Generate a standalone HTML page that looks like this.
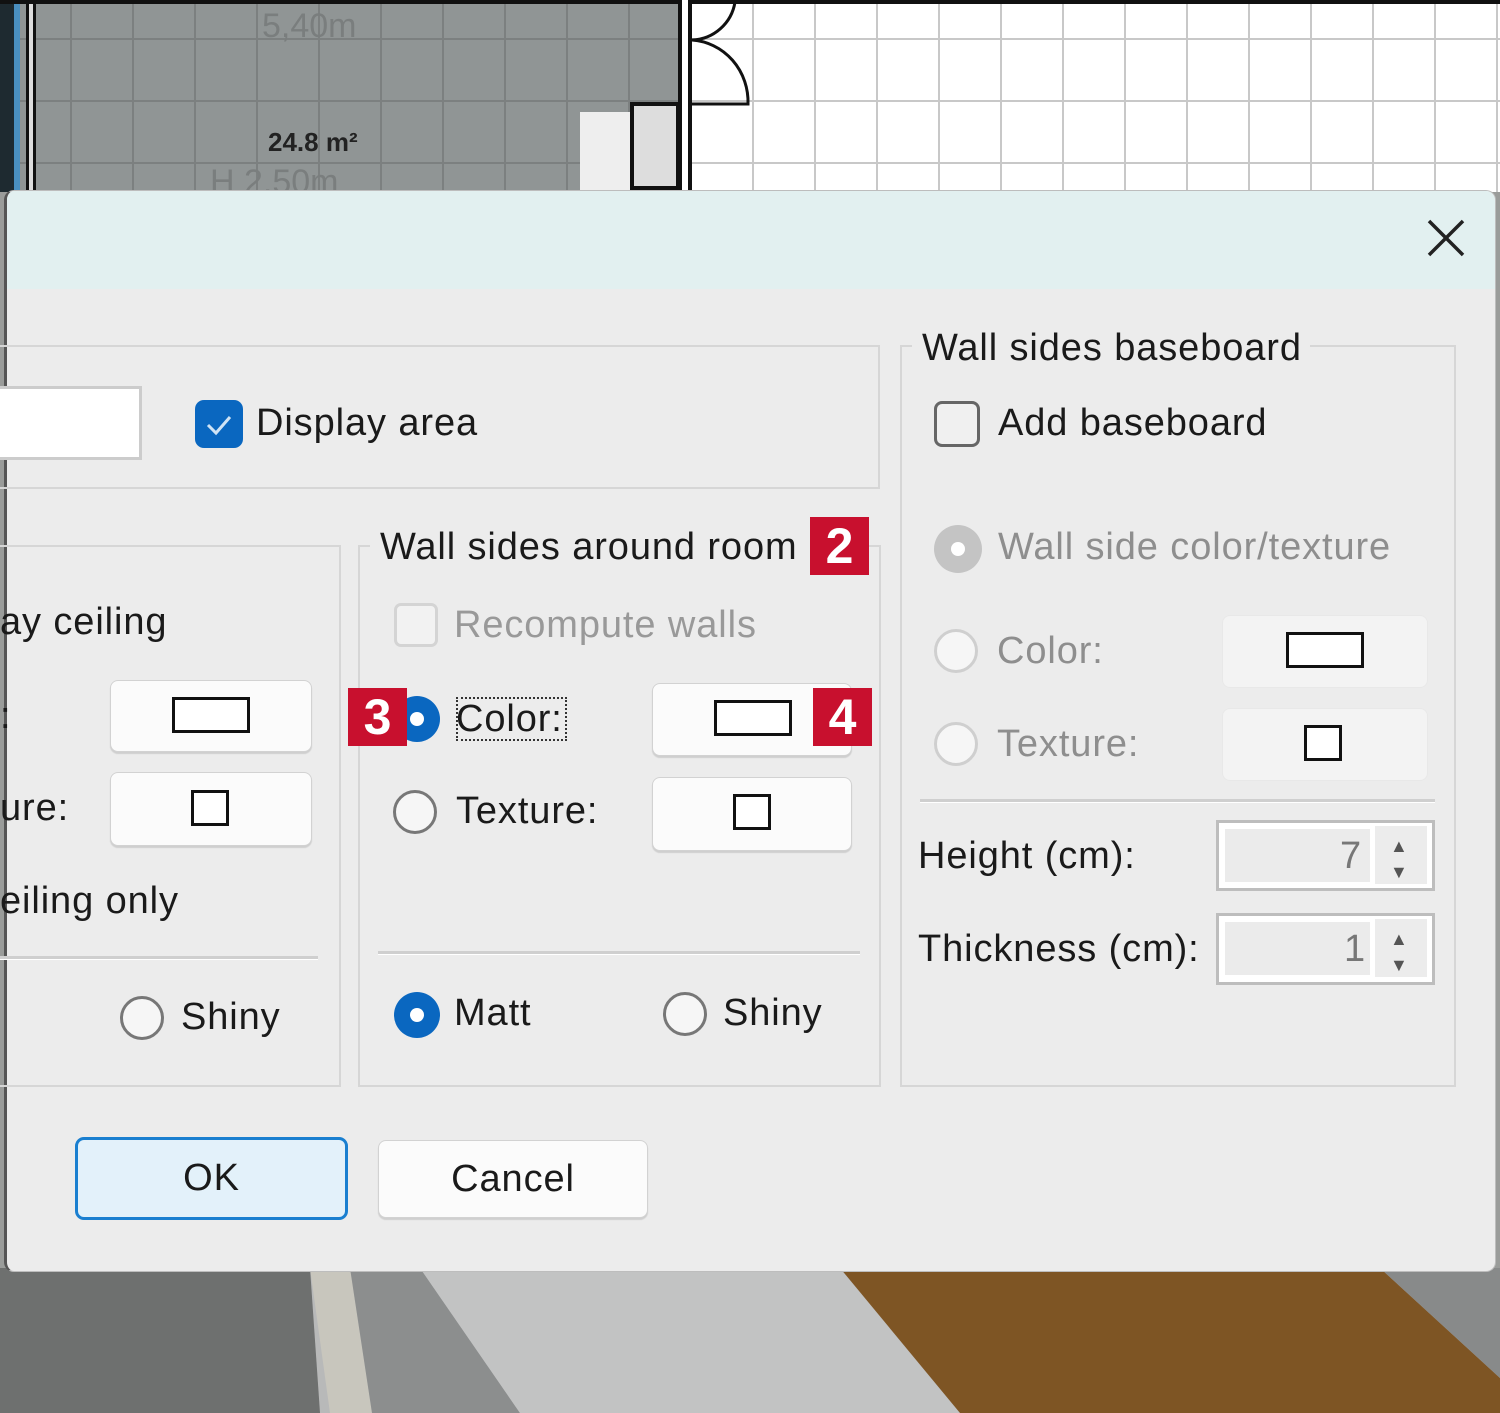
<!DOCTYPE html>
<html><head><meta charset="utf-8"><style>
*{margin:0;padding:0;box-sizing:border-box}
body{width:1500px;height:1413px;overflow:hidden;position:relative;background:#9a9c9a;font-family:"Liberation Sans",sans-serif;}
.a{position:absolute}
.t{position:absolute;font-size:38px;line-height:44px;color:#1a1a1a;white-space:nowrap;letter-spacing:0.9px}
.g{color:#8e8e8e}
.box{position:absolute;border:2px solid #d6d6d6;}
.btn{position:absolute;background:#fbfbfb;border:1px solid #d2d2d2;border-radius:8px;box-shadow:0 2px 1px #cfcfcf}
.btn.f{background:#f3f3f3;border-color:#e8e8e8;box-shadow:none}
.sw{position:absolute;border:3px solid #111;background:#fff}
.rad{position:absolute;width:44px;height:44px;border-radius:50%;border:3px solid #777;background:#f6f6f6}
.rad.f{border-color:#cfcfcf}
.badge{position:absolute;background:#c8102e;color:#fff;font-weight:bold;font-size:50px;line-height:58px;text-align:center;width:59px;height:58px}
.sep{position:absolute;height:4px;background:#cfcfcf;border-bottom:1px solid #fff}
</style></head><body>
<div class="a" style="left:0;top:0;width:1500px;height:192px;background:#fff;
background-image:linear-gradient(#c8c8c8 2px,transparent 2px),linear-gradient(90deg,#c8c8c8 2px,transparent 2px);background-size:62px 62px;background-position:0 38px,8px 0"></div>
<div class="a" style="left:0;top:0;width:682px;height:192px;background:#909595;
background-image:linear-gradient(#7c8080 2px,transparent 2px),linear-gradient(90deg,#7c8080 2px,transparent 2px);background-size:62px 62px;background-position:0 38px,8px 0"></div>
<div class="a" style="left:0;top:0;width:14px;height:192px;background:#1e2a30"></div>
<div class="a" style="left:14px;top:0;width:6px;height:192px;background:#4a8fbf"></div>
<div class="a" style="left:26px;top:0;width:10px;height:192px;border-left:3px solid #111;border-right:3px solid #111;background:#ddd"></div>
<div class="a" style="left:0;top:0;width:1500px;height:4px;background:#111"></div>
<div class="a" style="left:678px;top:0;width:14px;height:192px;border-left:4px solid #111;border-right:4px solid #111;background:#fff"></div>
<div class="a" style="left:580px;top:112px;width:50px;height:80px;background:#eee"></div>
<div class="a" style="left:630px;top:102px;width:50px;height:88px;border:4px solid #111;background:#ddd"></div>
<svg class="a" style="left:690px;top:0" width="70" height="110"><path d="M2 40 A45 45 0 0 0 45 2 M2 40 A60 62 0 0 1 58 104 L2 104" fill="none" stroke="#111" stroke-width="3"/></svg>
<div class="t" style="left:262px;top:4px;color:#7a7e7e;font-size:34px;letter-spacing:0">5,40m</div>
<div class="t" style="left:268px;top:120px;font-size:26px;font-weight:bold;color:#222;letter-spacing:0">24.8 m²</div>
<div class="t" style="left:210px;top:160px;color:#7a7e7e;font-size:34px;letter-spacing:0">H 2,50m</div>
<div class="a" style="left:0;top:1268px;width:1500px;height:145px;background:#b8b9b9"></div>
<svg class="a" style="left:0;top:1268px" width="1500" height="145">
<polygon points="0,0 310,0 320,145 0,145" fill="#6e706f"/>
<polygon points="310,0 350,0 372,145 330,145" fill="#c8c6bd"/>
<polygon points="350,0 420,0 520,145 372,145" fill="#8c8e8e"/>
<polygon points="420,0 840,0 960,145 520,145" fill="#c2c3c3"/>
<polygon points="840,0 1380,0 1500,110 1500,145 960,145" fill="#7e5524"/>
<polygon points="1380,0 1500,0 1500,110" fill="#888a8a"/>
</svg>
<div class="a" style="left:4px;top:190px;width:1492px;height:1082px;background:#ececec;border-radius:10px;border:1px solid #bdbdbd;border-left:3px solid #555;overflow:hidden">
<div class="a" style="left:0;top:0;width:100%;height:98px;background:#e2f0f0"></div>
</div>
<svg class="a" style="left:1426px;top:218px" width="40" height="40"><path d="M3 3L37 37M37 3L3 37" stroke="#222" stroke-width="3.5"/></svg>
<div class="box" style="left:-4px;top:345px;width:884px;height:144px"></div>
<div class="box" style="left:-4px;top:545px;width:345px;height:542px"></div>
<div class="box" style="left:358px;top:545px;width:523px;height:542px"></div>
<div class="box" style="left:900px;top:345px;width:556px;height:742px"></div>
<div class="a" style="left:370px;top:530px;width:440px;height:40px;background:#ececec"></div>
<div class="a" style="left:912px;top:330px;width:398px;height:40px;background:#ececec"></div>
<div class="a" style="left:0;top:386px;width:142px;height:74px;background:#fff;border:3px solid #ccc;border-left:none"></div>
<div class="a" style="left:195px;top:400px;width:48px;height:48px;background:#0a67c0;border-radius:9px"></div>
<svg class="a" style="left:195px;top:400px" width="48" height="48"><path d="M13 25l8 8 14-16" fill="none" stroke="#cfe3f5" stroke-width="3"/></svg>
<div class="t" style="left:256px;top:401px">Display area</div>
<div class="t" style="left:0;top:600px">ay ceiling</div>
<div class="t" style="left:0;top:694px">:</div>
<div class="btn" style="left:110px;top:680px;width:202px;height:72px"></div>
<div class="sw" style="left:172px;top:697px;width:78px;height:36px"></div>
<div class="t" style="left:0;top:786px">ure:</div>
<div class="btn" style="left:110px;top:772px;width:202px;height:74px"></div>
<div class="sw" style="left:191px;top:790px;width:38px;height:36px"></div>
<div class="t" style="left:0;top:879px">eiling only</div>
<div class="sep" style="left:0;top:956px;width:318px"></div>
<div class="rad" style="left:120px;top:996px"></div>
<div class="t" style="left:181px;top:995px">Shiny</div>
<div class="t" style="left:380px;top:525px">Wall sides around room</div>
<div class="badge" style="left:810px;top:517px">2</div>
<div class="a" style="left:394px;top:603px;width:44px;height:44px;border:3px solid #d4d4d4;border-radius:7px;background:#f2f2f2"></div>
<div class="t g" style="left:454px;top:603px;color:#999">Recompute walls</div>
<div class="a" style="left:394px;top:696px;width:46px;height:46px;border-radius:50%;background:#0a67c0"></div>
<div class="a" style="left:410px;top:712px;width:14px;height:14px;border-radius:50%;background:#fff"></div>
<div class="badge" style="left:348px;top:688px">3</div>
<div class="t" style="left:456px;top:697px;outline:2px dotted #333;outline-offset:-2px;padding-right:4px">Color:</div>
<div class="btn" style="left:652px;top:683px;width:200px;height:73px"></div>
<div class="sw" style="left:714px;top:700px;width:78px;height:36px"></div>
<div class="badge" style="left:813px;top:688px">4</div>
<div class="rad" style="left:393px;top:790px"></div>
<div class="t" style="left:456px;top:789px">Texture:</div>
<div class="btn" style="left:652px;top:777px;width:200px;height:74px"></div>
<div class="sw" style="left:733px;top:794px;width:38px;height:36px"></div>
<div class="sep" style="left:378px;top:951px;width:482px"></div>
<div class="a" style="left:394px;top:992px;width:46px;height:46px;border-radius:50%;background:#0a67c0"></div>
<div class="a" style="left:410px;top:1008px;width:14px;height:14px;border-radius:50%;background:#fff"></div>
<div class="t" style="left:454px;top:991px">Matt</div>
<div class="rad" style="left:663px;top:992px"></div>
<div class="t" style="left:723px;top:991px">Shiny</div>
<div class="t" style="left:922px;top:326px">Wall sides baseboard</div>
<div class="a" style="left:934px;top:401px;width:46px;height:46px;border:3px solid #666;border-radius:8px;background:#f0f0f0"></div>
<div class="t" style="left:998px;top:401px">Add baseboard</div>
<div class="a" style="left:934px;top:525px;width:48px;height:48px;border-radius:50%;background:#c4c4c4"></div>
<div class="a" style="left:951px;top:542px;width:14px;height:14px;border-radius:50%;background:#fff"></div>
<div class="t g" style="left:998px;top:525px">Wall side color/texture</div>
<div class="rad f" style="left:934px;top:629px"></div>
<div class="t g" style="left:997px;top:629px">Color:</div>
<div class="btn f" style="left:1222px;top:615px;width:206px;height:73px"></div>
<div class="sw" style="left:1286px;top:632px;width:78px;height:36px"></div>
<div class="rad f" style="left:934px;top:722px"></div>
<div class="t g" style="left:997px;top:722px">Texture:</div>
<div class="btn f" style="left:1222px;top:708px;width:206px;height:73px"></div>
<div class="sw" style="left:1304px;top:725px;width:38px;height:36px"></div>
<div class="sep" style="left:920px;top:799px;width:515px"></div>
<div class="t" style="left:918px;top:834px">Height (cm):</div>
<div class="a" style="left:1216px;top:820px;width:219px;height:71px;border:3px solid #bdbdbd;background:#fff"></div>
<div class="a" style="left:1225px;top:829px;width:145px;height:53px;background:#ebebeb"></div>
<div class="t g" style="left:1340px;top:834px;color:#777">7</div>
<div class="a" style="left:1375px;top:826px;width:52px;height:58px;background:#ececec"></div>
<div class="t" style="left:1390px;top:824px;font-size:18px;color:#555">▲</div>
<div class="t" style="left:1390px;top:850px;font-size:18px;color:#555">▼</div>
<div class="t" style="left:918px;top:927px">Thickness (cm):</div>
<div class="a" style="left:1216px;top:913px;width:219px;height:72px;border:3px solid #bdbdbd;background:#fff"></div>
<div class="a" style="left:1225px;top:922px;width:145px;height:53px;background:#ebebeb"></div>
<div class="t g" style="left:1344px;top:927px;color:#777">1</div>
<div class="a" style="left:1375px;top:919px;width:52px;height:58px;background:#ececec"></div>
<div class="t" style="left:1390px;top:917px;font-size:18px;color:#555">▲</div>
<div class="t" style="left:1390px;top:943px;font-size:18px;color:#555">▼</div>
<div class="a" style="left:75px;top:1137px;width:273px;height:83px;border:3px solid #1a7fd0;border-radius:9px;background:#e3f1fa"></div>
<div class="t" style="left:75px;top:1156px;width:273px;text-align:center">OK</div>
<div class="btn" style="left:378px;top:1140px;width:270px;height:78px"></div>
<div class="t" style="left:378px;top:1157px;width:270px;text-align:center">Cancel</div>
</body></html>
